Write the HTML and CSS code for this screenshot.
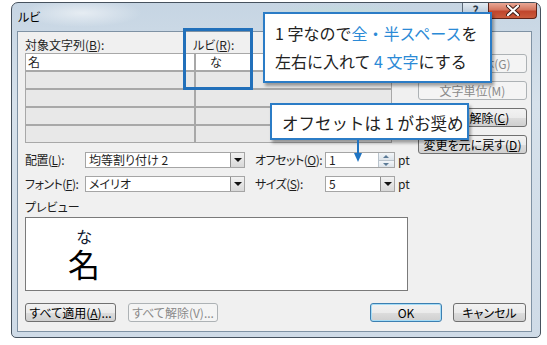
FILE: index.html
```html
<!DOCTYPE html>
<html>
<head>
<meta charset="utf-8">
<link rel="stylesheet" href="styles.css">
</head>
<body>

<div class="window">
  <div class="titlebar">
    <span class="title">ルビ</span>
    <div class="caption-btns">
      <span class="help">?</span>
      <span class="close">
        <svg width="14" height="11" viewBox="0 0 14 11"><path d="M2 1 L12 10 M12 1 L2 10" stroke="#3a1a14" stroke-width="4" stroke-linecap="round"/><path d="M2 1 L12 10 M12 1 L2 10" stroke="#fff" stroke-width="2.2" stroke-linecap="round"/></svg>
      </span>
    </div>
  </div>

  <div class="client">
    <div class="top">
      <div class="ruby-table">
        <div class="heads">
          <span>対象文字列(<u>B</u>):</span>
          <span>ルビ(<u>R</u>):</span>
        </div>
        <div class="grid">
          <div class="cell on">名</div><div class="cell on ruby-cell">　な　</div>
          <div class="cell"></div><div class="cell"></div>
          <div class="cell"></div><div class="cell"></div>
          <div class="cell"></div><div class="cell"></div>
          <div class="cell"></div><div class="cell"></div>
        </div>
      </div>
      <div class="side-btns">
        <button class="btn" disabled>文字列全体(G)</button>
        <button class="btn" disabled>文字単位(M)</button>
        <button class="btn">ルビの解除(<u>C</u>)</button>
        <button class="btn">変更を元に戻す(<u>D</u>)</button>
      </div>
    </div>

    <div class="options">
      <span class="lbl">配置(<u>L</u>):</span>
      <div class="field combo"><span class="val">均等割り付け 2</span><span class="drop"></span></div>
      <span class="lbl lbl2">オフセット(<u>O</u>):</span>
      <div class="field combo"><span class="val">1</span><span class="spin"><i class="up"></i><i class="down"></i></span></div>
      <span class="pt">pt</span>

      <span class="lbl">フォント(<u>F</u>):</span>
      <div class="field combo"><span class="val">メイリオ</span><span class="drop"></span></div>
      <span class="lbl lbl2">サイズ(<u>S</u>):</span>
      <div class="field combo"><span class="val">5</span><span class="drop"></span></div>
      <span class="pt">pt</span>
    </div>

    <div class="preview-label">プレビュー</div>
    <div class="preview">
      <div class="ruby-sample">
        <span class="rt">な</span>
        <span class="rb">名</span>
      </div>
    </div>

    <div class="bottom">
      <button class="btn wide">すべて適用(<u>A</u>)...</button>
      <button class="btn wide" disabled>すべて解除(V)...</button>
      <span class="spacer"></span>
      <button class="btn ok">OK</button>
      <button class="btn cancel">キャンセル</button>
    </div>
  </div>
</div>

<!-- annotations over the screenshot -->
<div class="mark"></div>

<div class="callout c1">
  1 字なので<span class="hl">全・半スペース</span>を<br>
  左右に入れて <span class="hl">4 文字</span>にする
</div>

<div class="callout c2">オフセットは 1 がお奨め</div>

<svg class="arrow" width="12" height="24" viewBox="0 0 12 24">
  <line x1="6" y1="0" x2="6" y2="15" stroke="#1f74c2" stroke-width="2"/>
  <polygon points="2,13 10,13 6,22" fill="#1f74c2"/>
</svg>

</body>
</html>
```

FILE: styles.css
```css
body {
    margin: 0;
    background: #fff;
    font-family: "Noto Sans CJK JP", "Liberation Sans", sans-serif;
    font-size: 12px;
    color: #1e1e1e;
    position: relative;
    width: 547px;
    height: 345px;
    overflow: hidden;
}

u { text-decoration: underline; text-underline-offset: 1px; }

/* Window frame (aero glass) */
.window {
    margin: 2px 0 0 11px;
    width: 530px;
    height: 336px;
    box-sizing: border-box;
    border: 1px solid #46525e;
    border-radius: 7px 7px 5px 5px;
    background:
        radial-gradient(ellipse 60px 14px at 70px 10px, rgba(255,255,255,0.55), transparent),
        radial-gradient(ellipse 80px 12px at 330px 12px, rgba(190,225,215,0.6), transparent),
        linear-gradient(180deg, #c6d5e3 0%, #d6e1eb 30%, #cfdbe7 100%);
    padding: 0 8px 5px 5px;
    display: flex;
    flex-direction: column;
    /* proportional kana, closer to Meiryo UI */
    font-feature-settings: "palt";
    white-space: nowrap;
}

.titlebar {
    height: 28px;
    display: flex;
    align-items: flex-start;
}

.title {
    flex: 1;
    line-height: 28px;
    padding-left: 1px;
    color: #000;
}

.caption-btns {
    display: flex;
    margin-right: -5px;
}

.help {
    width: 26px;
    height: 16px;
    box-sizing: border-box;
    border: 1px solid #5c6a78;
    border-top: none;
    border-right: none;
    border-radius: 0 0 0 4px;
    background: linear-gradient(#e4ecf3, #c5d3e0 50%, #b6c7d7);
    font-weight: bold;
    text-align: center;
    line-height: 14px;
    color: #2c3a48;
}

.close {
    width: 49px;
    height: 16px;
    box-sizing: border-box;
    border: 1px solid #5e2318;
    border-top: none;
    border-radius: 0 0 4px 0;
    background: linear-gradient(#e9a896 0%, #d47660 45%, #c0452c 55%, #c95b3c 100%);
    display: flex;
    align-items: center;
    justify-content: center;
}

/* Client area */
.client {
    flex: 1;
    border: 1px solid #7f92a4;
    background: #f0f0f0;
    padding: 5px 4px 0 7px;
}

.top {
    display: flex;
    align-items: flex-start;
    height: 106px;
}

.ruby-table {
    width: 367px;
}

.heads {
    display: grid;
    grid-template-columns: 168px 1fr;
    height: 16px;
    line-height: 16px;
}

.grid {
    display: grid;
    grid-template-columns: 168px 195px;
    grid-auto-rows: 16px;
    gap: 2px;
    padding: 1px;
    background: #a8a8a8;
}

.cell {
    background: #e8e8e8;
    line-height: 16px;
    padding-left: 2px;
}

.cell.on {
    background: #fff;
}

.ruby-cell {
    font-feature-settings: normal;
}

.side-btns {
    margin-left: 26px;
    width: 109px;
    padding-top: 17px;
    display: flex;
    flex-direction: column;
    gap: 8px;
}

/* Win7 push buttons */
.btn {
    box-sizing: border-box;
    height: 19px;
    margin: 0;
    padding: 0;
    border: 1px solid #707070;
    border-radius: 3px;
    background: linear-gradient(#f2f2f2 0%, #ebebeb 50%, #dddddd 51%, #cfcfcf 100%);
    font-family: inherit;
    font-size: 12px;
    font-feature-settings: "palt";
    line-height: 16px;
    color: #000;
    text-align: center;
    white-space: nowrap;
}

.btn:disabled {
    border-color: #adb2b5;
    background: #f4f4f4;
    color: #8a8a8a;
}

/* Options rows */
.options {
    display: grid;
    grid-template-columns: 60px 160px 80px 70px auto;
    grid-auto-rows: 16px;
    row-gap: 8px;
    margin-top: 9px;
    align-items: center;
    line-height: 16px;
}

.lbl {
    letter-spacing: -0.5px;
}

.lbl2 {
    padding-left: 10px;
}

.pt {
    padding-left: 3px;
}

.field {
    height: 16px;
    box-sizing: border-box;
    border: 1px solid #a5a5a5;
    background: #fff;
    display: flex;
    align-items: stretch;
}

.field .val {
    flex: 1;
    line-height: 14px;
    padding-left: 3px;
}

.drop {
    width: 13px;
    border-left: 1px solid #8e8e8e;
    background: linear-gradient(#f2f2f2, #d8d8d8);
    position: relative;
}

.drop::after {
    content: "";
    position: absolute;
    left: 3px;
    top: 5px;
    border-left: 4px solid transparent;
    border-right: 4px solid transparent;
    border-top: 4px solid #111;
}

.spin {
    width: 15px;
    display: flex;
    flex-direction: column;
    border-left: 1px solid #b9c3cc;
}

.spin i {
    flex: 1;
    position: relative;
    background: linear-gradient(#f3f6f9, #dde4ea);
}

.spin .up { border-bottom: 1px solid #b9c3cc; }

.spin .up::after,
.spin .down::after {
    content: "";
    position: absolute;
    left: 4px;
    top: 2px;
    border-left: 3px solid transparent;
    border-right: 3px solid transparent;
}

.spin .up::after { border-bottom: 3px solid #5b7a96; }
.spin .down::after { border-top: 3px solid #5b7a96; }

/* Preview */
.preview-label {
    margin-top: 7px;
    line-height: 16px;
}

.preview {
    margin-top: 2px;
    width: 383px;
    height: 74px;
    box-sizing: border-box;
    border: 1px solid #7a7a7a;
    background: #fff;
    padding: 10px 0 0 42px;
}

.ruby-sample {
    display: inline-flex;
    flex-direction: column;
    align-items: center;
    color: #000;
}

.rt {
    font-size: 16px;
    line-height: 17px;
    color: #101830;
}

.rb {
    font-size: 32px;
    line-height: 32px;
    margin-top: 2px;
}

/* Bottom buttons */
.bottom {
    margin-top: 12px;
    display: flex;
    padding-right: 1px;
}

.btn.wide { width: 91px; }
.btn.wide + .btn.wide { width: 90px; margin-left: 12px; }

.spacer { flex: 1; }

.btn.ok {
    width: 72px;
    border-color: #3c7fb1;
    box-shadow: inset 0 0 0 1px #a6dcf6;
}

.btn.cancel {
    width: 73px;
    margin-left: 11px;
}

/* Annotations */
.mark {
    position: absolute;
    left: 183px;
    top: 28px;
    width: 70px;
    height: 62px;
    box-sizing: border-box;
    border: 3px solid #2270ba;
}

.callout {
    position: absolute;
    box-sizing: border-box;
    border: 2px solid #2b7cc6;
    background: #fff;
    box-shadow: 2px 3px 3px rgba(0,0,0,0.35);
    font-size: 16px;
    color: #222;
    padding-left: 10px;
    white-space: nowrap;
}

.callout .hl {
    color: #2b8ad6;
}

.c1 {
    left: 263px;
    top: 12px;
    width: 229px;
    height: 71px;
    padding-top: 5px;
    line-height: 28px;
}

.c2 {
    left: 270px;
    top: 103px;
    width: 199px;
    height: 37px;
    padding-top: 3px;
    line-height: 30px;
    font-size: 16.5px;
}

.arrow {
    position: absolute;
    left: 352px;
    top: 140px;
}
```
